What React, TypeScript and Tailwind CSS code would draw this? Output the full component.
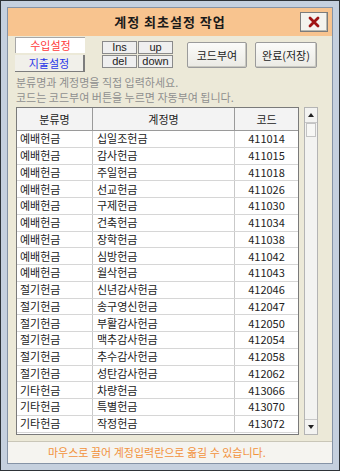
import React from 'react';

const ROWS: [string, string, string][] = [
  ['예배헌금', '십일조헌금', '411014'],
  ['예배헌금', '감사헌금', '411015'],
  ['예배헌금', '주일헌금', '411018'],
  ['예배헌금', '선교헌금', '411026'],
  ['예배헌금', '구제헌금', '411030'],
  ['예배헌금', '건축헌금', '411034'],
  ['예배헌금', '장학헌금', '411038'],
  ['예배헌금', '심방헌금', '411042'],
  ['예배헌금', '월삭헌금', '411043'],
  ['절기헌금', '신년감사헌금', '412046'],
  ['절기헌금', '송구영신헌금', '412047'],
  ['절기헌금', '부활감사헌금', '412050'],
  ['절기헌금', '맥추감사헌금', '412054'],
  ['절기헌금', '추수감사헌금', '412058'],
  ['절기헌금', '성탄감사헌금', '412062'],
  ['기타헌금', '차량헌금', '413066'],
  ['기타헌금', '특별헌금', '413070'],
  ['기타헌금', '작정헌금', '413072'],
];

const font = { fontFamily: '"Noto Sans CJK KR", "Noto Sans", sans-serif' };

const SmallBtn = ({ label }: { label: string }) => (
  <div className="w-[35px] h-[13px] flex items-center justify-center bg-[#efefef] border border-[#8a8a8a] text-[11px] leading-[11px] text-[#222] font-['Liberation_Sans',sans-serif] overflow-hidden">
    {label}
  </div>
);

const BigBtn = ({ label, w }: { label: string; w: string }) => (
  <div className={`${w} h-[26px] flex items-center justify-center rounded-[2px] border border-[#9b9b9b] bg-gradient-to-b from-[#fbfbf9] to-[#ebeae4] text-[11px] text-[#222] shadow-[inset_-1px_-1px_0_#c8c8c0]`}>
    {label}
  </div>
);

export default function App() {
  return (
    <div className="w-[340px] h-[471px] bg-[#c5d0de] border border-[#2e3338] p-[6px] flex" style={font}>
      <div className="flex-1 flex flex-col border border-[#8593a6] overflow-hidden">
        {/* title */}
        <div className="relative h-[28px] shrink-0 bg-[#f8c48f] flex items-center justify-center">
          <span className="text-[13px] font-bold text-[#1a1a1a] tracking-[1px]">계정 최초설정 작업</span>
          <div className="absolute right-[4px] top-[4px] w-[28px] h-[20px] bg-[#f4f3ee] border border-[#7c7c7c] shadow-[inset_-1px_-1px_0_#b8b8b0] flex items-center justify-center">
            <svg width="12" height="12" viewBox="0 0 12 12">
              <path d="M2 2 L10 10 M10 2 L2 10" stroke="#a01414" strokeWidth="2.8" strokeLinecap="round" />
            </svg>
          </div>
        </div>

        {/* body */}
        <div className="h-[405px] shrink-0 bg-[#ece9d8] flex flex-col">
          <div className="flex items-start">
            <div className="ml-[7px] mt-[1px] flex flex-col gap-[2px]">
              <div className="w-[70px] h-[16px] bg-white border-t border-l border-[#a7a7a7] flex items-center justify-center text-[11px] text-[#ff3a3a]">
                수입설정
              </div>
              <div className="w-[70px] h-[17px] bg-[#f1f0ea] border-r-2 border-b border-[#7d7d7d] flex items-center justify-center text-[11px] text-[#2b35e8]">
                지출설정
              </div>
            </div>
            <div className="ml-[17px] mt-[5px] grid grid-cols-2 gap-[1px]">
              <SmallBtn label="Ins" />
              <SmallBtn label="up" />
              <SmallBtn label="del" />
              <SmallBtn label="down" />
            </div>
            <div className="ml-[14px] mt-[6px] flex gap-[8px]">
              <BigBtn label="코드부여" w="w-[60px]" />
              <BigBtn label="완료(저장)" w="w-[62px]" />
            </div>
          </div>

          <div className="ml-[8px] mt-[3px] text-[11px] leading-[15px] text-[#8f8f8f]">
            <div>분류명과 계정명을 직접 입력하세요.</div>
            <div>코드는 코드부여 버튼을 누르면 자동부여 됩니다.</div>
          </div>

          <div className="ml-[8px] mt-[2px] flex gap-[5px]">
            <div className="w-[283px] h-[328px] bg-white border border-[#7a7a7a] overflow-hidden">
              <div className="flex h-[23px] bg-[#f3f3f3] border-b border-[#9a9a9a] text-[11px] text-[#222]">
                <div className="w-[76px] border-r border-[#9a9a9a] flex items-center justify-center">분류명</div>
                <div className="w-[142px] border-r border-[#9a9a9a] flex items-center justify-center">계정명</div>
                <div className="flex-1 flex items-center justify-center">코드</div>
              </div>
              {ROWS.map(([a, b, c]) => (
                <div key={c} className="flex h-[16.75px] border-b border-[#d6d6d6] text-[11px] leading-none text-[#222]">
                  <div className="w-[76px] border-r border-[#c9c9c9] flex items-center pl-[3px]">{a}</div>
                  <div className="w-[142px] border-r border-[#c9c9c9] flex items-center pl-[4px]">{b}</div>
                  <div className="flex-1 flex items-center justify-center">{c}</div>
                </div>
              ))}
            </div>
            <div className="w-[14px] h-[328px] bg-[#f3f3f1] border border-[#b4b4b4] flex flex-col">
              <div className="h-[15px] flex items-center justify-center border-b border-[#c8c8c8]">
                <svg width="6" height="4" viewBox="0 0 6 4"><path d="M3 0 L6 4 L0 4 Z" fill="#222" /></svg>
              </div>
              <div className="h-[14px] mx-[1px] bg-[#f7f7f5] border border-[#c3c3c3]" />
              <div className="flex-1" />
              <div className="h-[15px] flex items-center justify-center border-t border-[#c8c8c8]">
                <svg width="6" height="4" viewBox="0 0 6 4"><path d="M0 0 L6 0 L3 4 Z" fill="#222" /></svg>
              </div>
            </div>
          </div>
        </div>

        {/* bottom strip */}
        <div className="flex-1 bg-[#f5f4f0] border-t border-[#c9c6b8] flex items-center pl-[40px] text-[11px] text-[#f2923c]">
          마우스로 끌어 계정입력란으로 옮길 수 있습니다.
        </div>
      </div>
    </div>
  );
}
